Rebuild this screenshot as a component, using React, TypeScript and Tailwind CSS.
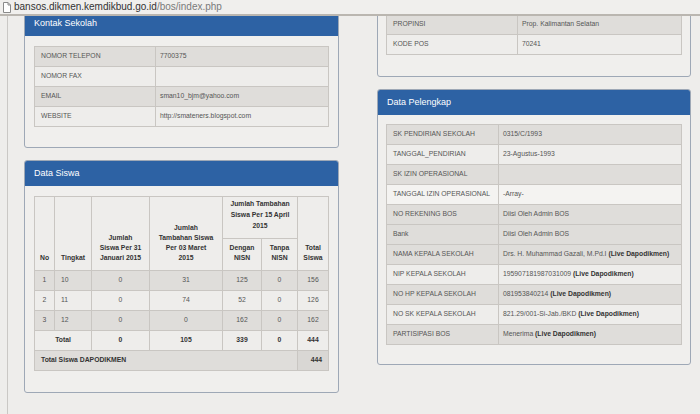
import type { ReactNode } from 'react'

const font = { fontFamily: '"Liberation Sans", Arial, sans-serif' }

function Panel({ title, className = '', children }: { title?: string; className?: string; children: ReactNode }) {
  return (
    <div className={`border border-[#9ea8b6] rounded-[3px] bg-[#f0efed] overflow-hidden ${className}`}>
      {title && (
        <div className="h-[25px] bg-[#2d62a4] px-[9px] flex items-center text-white text-[9px]">{title}</div>
      )}
      {children}
    </div>
  )
}

type Row = { label: string; value?: ReactNode; bg: string }

function KeyTable({ rows, labelW }: { rows: Row[]; labelW: string }) {
  return (
    <table className="w-full table-fixed border-collapse text-[6.8px] text-[#555]">
      <colgroup>
        <col className={labelW} />
        <col />
      </colgroup>
      <tbody>
        {rows.map((r) => (
          <tr key={r.label} className={`h-[20px] ${r.bg}`}>
            <td className="border border-[#c9c6c2] pl-[6px] whitespace-nowrap">{r.label}</td>
            <td className="border border-[#c9c6c2] pl-[4px] whitespace-nowrap">{r.value}</td>
          </tr>
        ))}
      </tbody>
    </table>
  )
}

const dark = 'bg-[#dfddda]'
const light = 'bg-[#eeedeb]'
const lightest = 'bg-[#f4f3f1]'

const live = <b className="text-[#333]">(Live Dapodikmen)</b>

const kontak: Row[] = [
  { label: 'NOMOR TELEPON', value: '7700375', bg: dark },
  { label: 'NOMOR FAX', bg: light },
  { label: 'EMAIL', value: 'sman10_bjm@yahoo.com', bg: dark },
  { label: 'WEBSITE', value: 'http://smateners.blogspot.com', bg: light },
]

const alamat: Row[] = [
  { label: 'PROPINSI', value: 'Prop. Kalimantan Selatan', bg: dark },
  { label: 'KODE POS', value: '70241', bg: light },
]

const pelengkap: Row[] = [
  { label: 'SK PENDIRIAN SEKOLAH', value: '0315/C/1993', bg: dark },
  { label: 'TANGGAL_PENDIRIAN', value: '23-Agustus-1993', bg: light },
  { label: 'SK IZIN OPERASIONAL', bg: dark },
  { label: 'TANGGAL IZIN OPERASIONAL', value: '-Array-', bg: lightest },
  { label: 'NO REKENING BOS', value: 'Diisi Oleh Admin BOS', bg: dark },
  { label: 'Bank', value: 'Diisi Oleh Admin BOS', bg: dark },
  { label: 'NAMA KEPALA SEKOLAH', value: <>Drs. H. Muhammad Gazali, M.Pd.I {live}</>, bg: dark },
  { label: 'NIP KEPALA SEKOLAH', value: <>195907181987031009 {live}</>, bg: light },
  { label: 'NO HP KEPALA SEKOLAH', value: <>081953840214 {live}</>, bg: dark },
  { label: 'NO SK KEPALA SEKOLAH', value: <>821.29/001-Si-Jab./BKD {live}</>, bg: light },
  { label: 'PARTISIPASI BOS', value: <>Menerima {live}</>, bg: dark },
]

const siswa = [
  { no: 1, tingkat: 10, jan: 0, mar: 31, dengan: 125, tanpa: 0, total: 156, bg: dark },
  { no: 2, tingkat: 11, jan: 0, mar: 74, dengan: 52, tanpa: 0, total: 126, bg: light },
  { no: 3, tingkat: 12, jan: 0, mar: 0, dengan: 162, tanpa: 0, total: 162, bg: dark },
]

function SiswaTable() {
  const th = 'border border-[#c9c6c2] align-bottom font-bold text-center pb-[7px] leading-[10px] whitespace-nowrap'
  const td = 'border border-[#c9c6c2] text-center'
  return (
    <table className="w-full table-fixed border-collapse text-[6.8px] text-[#555]">
      <colgroup>
        <col className="w-[20px]" />
        <col className="w-[37px]" />
        <col className="w-[58px]" />
        <col className="w-[73px]" />
        <col className="w-[39px]" />
        <col className="w-[36px]" />
        <col />
      </colgroup>
      <thead className="bg-[#eeedeb] text-[#333]">
        <tr className="h-[42px]">
          <th rowSpan={2} className={`${th} text-left pl-[5px]`}>No</th>
          <th rowSpan={2} className={`${th} text-left pl-[6px]`}>Tingkat</th>
          <th rowSpan={2} className={th}>Jumlah<br />Siswa Per 31<br />Januari 2015</th>
          <th rowSpan={2} className={th}>Jumlah<br />Tambahan Siswa<br />Per 03 Maret<br />2015</th>
          <th colSpan={2} className={`${th} leading-[11px]`}>Jumlah Tambahan<br />Siswa Per 15 April<br />2015</th>
          <th rowSpan={2} className={th}>Total<br />Siswa</th>
        </tr>
        <tr className="h-[32px]">
          <th className={th}>Dengan<br />NISN</th>
          <th className={th}>Tanpa<br />NISN</th>
        </tr>
      </thead>
      <tbody>
        {siswa.map((s) => (
          <tr key={s.no} className={`h-[20px] ${s.bg}`}>
            <td className={td}>{s.no}</td>
            <td className="border border-[#c9c6c2] pl-[6px]">{s.tingkat}</td>
            <td className={td}>{s.jan}</td>
            <td className={td}>{s.mar}</td>
            <td className={td}>{s.dengan}</td>
            <td className={td}>{s.tanpa}</td>
            <td className={td}>{s.total}</td>
          </tr>
        ))}
        <tr className="h-[20px] bg-[#eeedeb] font-bold text-[#333]">
          <td colSpan={2} className={td}>Total</td>
          <td className={td}>0</td>
          <td className={td}>105</td>
          <td className={td}>339</td>
          <td className={td}>0</td>
          <td className={td}>444</td>
        </tr>
        <tr className="h-[20px] bg-[#dfddda] font-bold text-[#333]">
          <td colSpan={6} className="border border-[#c9c6c2] pl-[6px]">Total Siswa DAPODIKMEN</td>
          <td className="border border-[#c9c6c2] text-right pr-[6px] bg-[#d9d7d4]">444</td>
        </tr>
      </tbody>
    </table>
  )
}

export default function App() {
  return (
    <div className="w-[700px] h-[414px] bg-[#eeedeb] overflow-hidden" style={font}>
      <div className="h-[16px] bg-[#f0efed] border-b-2 border-[#bab6b0] flex items-center">
        <svg className="ml-[3px]" width="8" height="11" viewBox="0 0 8 11">
          <path d="M0.5 0.5 H5 L7.5 3 V10.5 H0.5 Z" fill="#fff" stroke="#8a8a8a" strokeWidth="1" />
          <path d="M5 0.5 V3 H7.5" fill="none" stroke="#8a8a8a" strokeWidth="1" />
        </svg>
        <span className="ml-[3px] text-[10px] leading-none text-[#333]">
          bansos.dikmen.kemdikbud.go.id<span className="text-[#7a7a7a]">/bos/index.php</span>
        </span>
      </div>

      <div className="h-[398px] overflow-hidden">
        <div className="ml-[7px] h-full border-l border-[#cac8c5] pl-[16px] flex gap-[38px]">
          <div className="w-[315px] flex flex-col">
            <Panel title="Kontak Sekolah" className="-mt-[6px]">
              <div className="pt-[10px] px-[9px] pb-[20px]">
                <KeyTable rows={kontak} labelW="w-[121px]" />
              </div>
            </Panel>
            <Panel title="Data Siswa" className="mt-[12px]">
              <div className="pt-[10px] px-[9px] pb-[21px]">
                <SiswaTable />
              </div>
            </Panel>
          </div>

          <div className="w-[314px] flex flex-col">
            <Panel className="-mt-[3px]">
              <div className="px-[8px] pb-[21px]">
                <KeyTable rows={alamat} labelW="w-[131px]" />
              </div>
            </Panel>
            <Panel title="Data Pelengkap" className="mt-[12px]">
              <div className="pt-[9px] px-[8px] pb-[19px]">
                <KeyTable rows={pelengkap} labelW="w-[112px]" />
              </div>
            </Panel>
          </div>
        </div>
      </div>
    </div>
  )
}
